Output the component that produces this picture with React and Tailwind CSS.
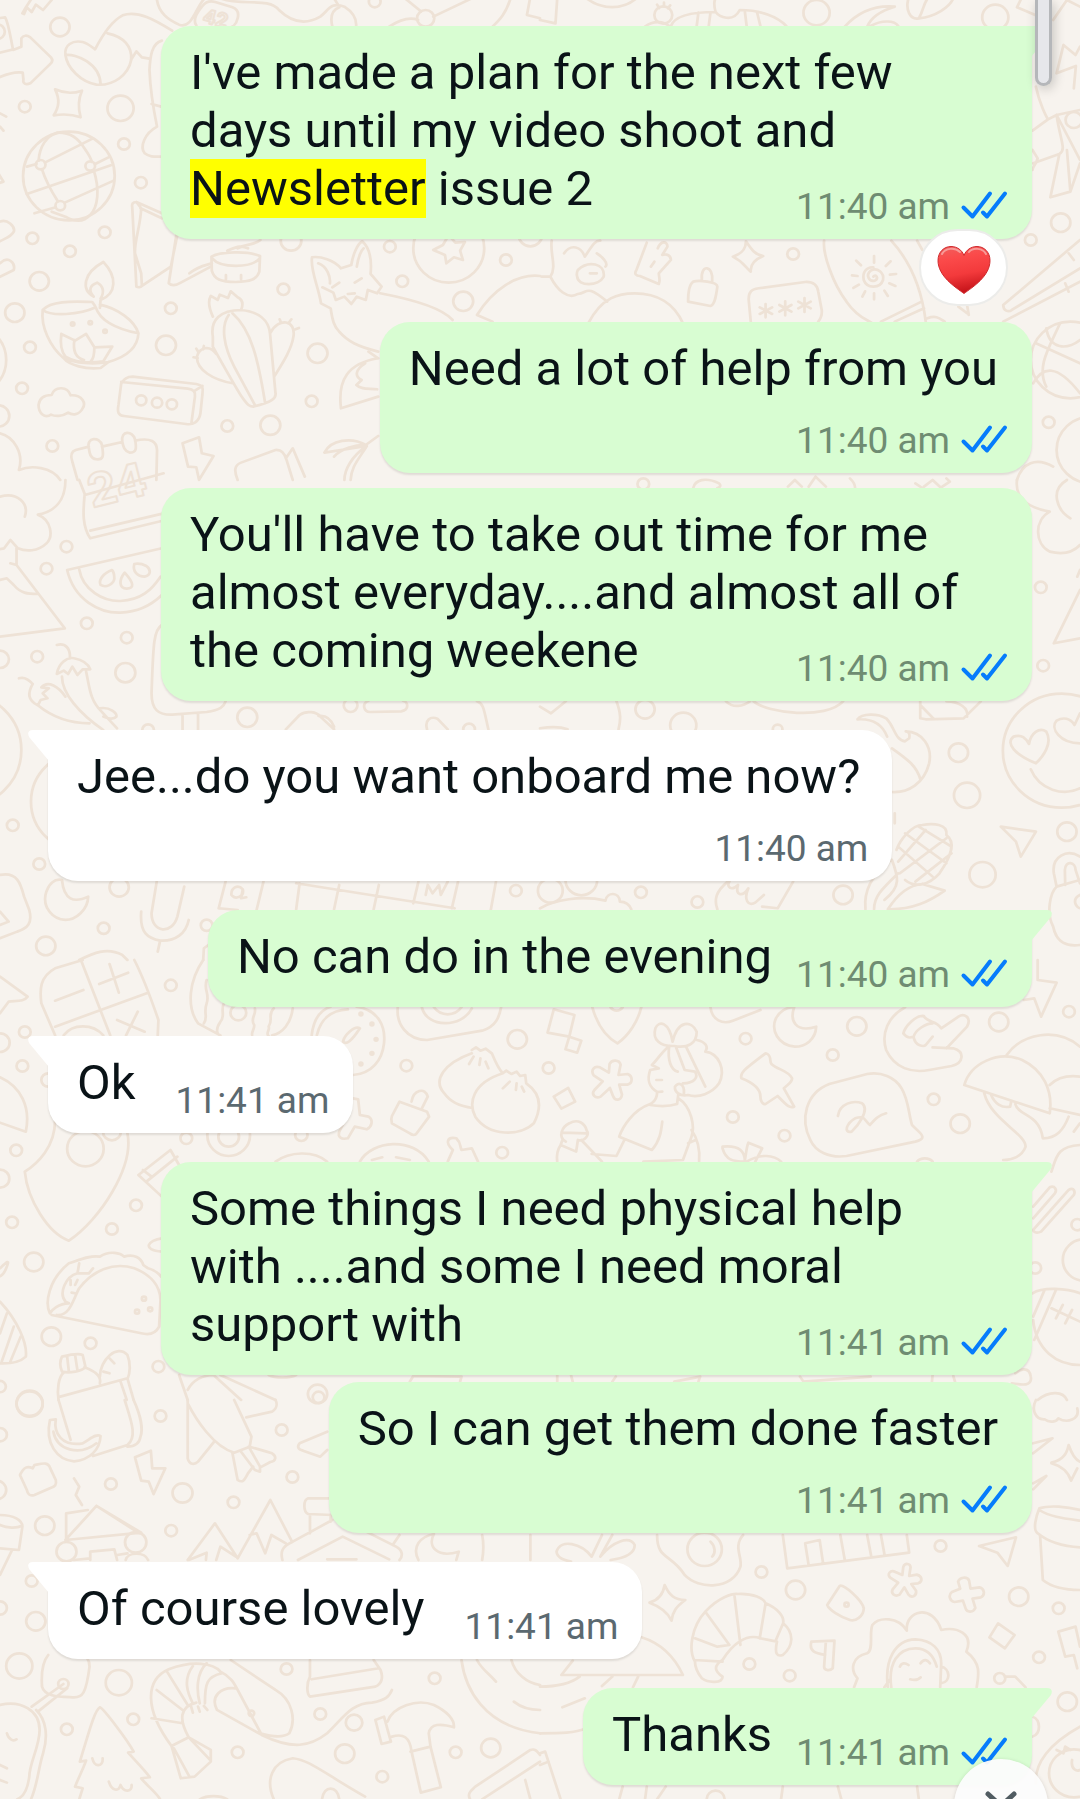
import clsx from "clsx";

const messages = [
  {
    id: 1,
    mine: true,
    tail: true,
    layout: "block",
    gap: "",
    text: (
      <>
        I've made a plan for the next few days until my video shoot and{" "}
        <mark className="bg-[#ffff00] py-px text-inherit">Newsletter</mark> issue 2
      </>
    ),
    time: "11:40 am",
    reaction: true,
  },
  { id: 2, mine: true, layout: "stacked", gap: "mt-4", text: "Need a lot of help from you", time: "11:40 am" },
  {
    id: 3,
    mine: true,
    layout: "block",
    gap: "mt-[15px]",
    text: (
      <>
        You'll have to take out time for me almost everyday....and almost all of{" "}
        <span className="whitespace-nowrap">the coming weekene</span>
      </>
    ),
    time: "11:40 am",
  },
  { id: 4, tail: true, layout: "stacked", gap: "mt-[29px]", text: "Jee...do you want onboard me now?", time: "11:40 am" },
  { id: 5, mine: true, tail: true, layout: "inline", gap: "mt-[29px]", text: "No can do in the evening", time: "11:40 am" },
  { id: 6, tail: true, layout: "inline", gap: "mt-[29px]", text: "Ok", time: "11:41 am" },
  {
    id: 7,
    mine: true,
    tail: true,
    layout: "block",
    gap: "mt-[29px]",
    text: (
      <>
        Some things I need physical help with ....and some I need moral{" "}
        <span className="whitespace-nowrap">support with</span>
      </>
    ),
    time: "11:41 am",
  },
  { id: 8, mine: true, layout: "stacked", gap: "mt-[7px]", text: "So I can get them done faster", time: "11:41 am" },
  { id: 9, tail: true, layout: "inline", gap: "mt-[29px]", text: "Of course lovely", time: "11:41 am" },
  { id: 10, mine: true, tail: true, layout: "inline", gap: "mt-[29px]", text: "Thanks", time: "11:41 am" },
];

// wallpaper is split in tiles, every tile has its own 1568 x 1440 drawing grid
const tiles = [
  {
    x: 0,
    y: 0,
    dots: [
      [174, 81, 28], [72, 320, 17], [350, 325, 38], [360, 432, 17], [409, 548, 17], [94, 715, 17], [304, 697, 17],
      [203, 754, 17], [114, 844, 28], [43, 938, 28], [87, 1042, 17], [64, 1165, 17], [496, 925, 17], [482, 1036, 29],
      [823, 868, 17], [845, 722, 30], [1132, 740, 17], [1168, 844, 17], [1345, 904, 29], [922, 1060, 29],
      [905, 1204, 17], [785, 1276, 29], [660, 1278, 17], [152, 1338, 17], [1469, 780, 17], [1303, 745, 103],
      [1088, 5, 17], [1236, 55, 25], [200, 528, 133], [118, 494, 14], [262, 498, 14], [175, 617, 14],
      [410, 1201, 15], [456, 1208, 15], [499, 1213, 15], [211, 972, 5], [262, 968, 5], [305, 994, 5],
      [-5, 1248, 32], [-90, 1080, 108], [-8, 95, 22], [1540, 705, 34],
    ],
    paths: [
      "M65 40C80 10 95-5 100-20M70 42L78 22L92 36L104 14L125 30L150 0",
      "M0 54L15 52C25 70 30 110 38 150L62 140V115C68 105 78 105 88 112L148 172C154 180 152 188 144 194L88 250C74 256 66 250 68 240L66 218C40 214 10 226-10 236M-10 160L40 148",
      "M190 165C186 135 210 120 240 126C255 130 265 140 276 148C300 100 330 60 356 46C400 30 450 60 500 92M190 165C195 205 235 245 280 254C330 258 372 225 381 180C384 140 360 110 312 100M190 165C220 160 290 190 292 252M380 180L396 154L412 172L434 176",
      "M470 122C440 130 436 170 434 210C436 260 440 300 456 380C420 400 405 440 420 460C435 472 450 470 470 470M440 312L468 320",
      "M455-5C460 40 490 60 520 74C560 90 570 10 600-10M588 18C598 4 610 2 625 6L675 22C690 28 694 40 690 55C686 76 676 84 655 84M588 18C570 40 560 62 570 76",
      "M640-5C700 20 780-10 810 30C840 60 880 80 930 50C955 30 960 5 1000 20C1030 40 1036 60 1034 80M965 80C958 50 965 30 985 22M970-5L985 20M1130 80C1160 60 1190 50 1214 60M1258 50L1380-10M1170-10L1222 34M1484-10C1470 40 1450 60 1430 80M1540-10L1530 45L1568 55",
      "M160 268C185 280 210 282 238 272C226 300 226 322 234 352C208 342 182 342 156 346C172 320 174 298 160 268Z",
      "M112 482C115 440 135 408 165 398C195 396 225 410 245 445C262 470 266 480 266 486M122 508C135 550 150 575 168 604M130 488L270 415M78 500L106 492M78 582L322 496M276 492L315 472M100 640L162 622M188 608L330 542M272 510C290 570 285 620 262 645C245 665 220 668 190 650L150 635",
      "M470 640L396 606C386 606 382 612 384 622L396 860C400 862 408 862 412 858L496 800L515 705M396 606L410 625C408 680 390 720 392 760L410 820L412 858M512 705L490 850C500 860 512 856 525 848L612 800M470 655L408 625M550 820C580 796 600 796 615 790",
      "M614 770C640 755 720 752 755 768L753 815C745 840 725 845 685 846C640 846 622 838 615 812ZM616 775C640 805 730 805 754 775M656 825V838M700 825V838M660 752C690 740 700 735 720 745M690 745C720 730 740 735 756 720",
      "M272 890C236 870 240 820 300 786C340 830 340 880 292 900L290 924M272 890C255 870 262 855 282 848C300 858 304 876 292 896M124 930C150 900 220 905 268 906L276 918M124 930C118 980 145 1040 185 1075C200 1095 250 1110 292 1104L315 1086C370 1070 400 1040 402 1000C390 960 340 925 290 914M124 930C150 950 230 945 278 922C290 960 330 985 402 1000M178 1002L218 1022L250 1002L274 1042L326 1040L300 1084C250 1092 215 1085 190 1070C175 1050 175 1025 178 1002M216 1020C210 1060 225 1075 244 1080M274 1042C274 1066 270 1078 264 1084M185 1075C220 1090 270 1094 315 1086",
      "M618 950C605 920 605 900 612 888L632 900L638 884L662 894L670 874L690 892C706 900 706 915 700 930M618 1010C610 960 640 930 700 930C750 935 780 960 784 1000L800 1180C802 1195 790 1206 736 1220C715 1220 705 1200 618 1040ZM664 945C640 980 650 1040 680 1100L740 1215M675 940C730 990 750 1080 770 1210M784 1000C810 950 860 960 852 1010C846 1050 820 1090 796 1130M676 1150C620 1140 570 1110 572 1070C580 1040 610 1036 628 1062M816 968L812 958M840 966L846 958M858 988L868 984M576 1056L570 1046M590 1048L592 1038M574 1074L562 1072",
      "M932 910C925 860 900 810 906 772C930 768 970 780 990 805L1020 795C1025 760 1040 730 1052 724C1080 750 1078 800 1076 822L1108 860L1095 880L1068 870L1062 900L1036 890L1020 912L1000 890L975 900L968 878L936 862M932 910L960 925C965 960 970 980 985 995C1010 1025 1040 1040 1098 1055M1104 880C1180 895 1280 920 1314 960M924 790C950 800 960 830 958 850M1036 800C1040 770 1050 750 1056 745M965 862L985 848M1030 848L1050 835M1010 882L1030 880",
      "M1303 705L1322 728L1350 726L1336 752L1344 780L1318 772L1296 790L1292 765L1258 750L1286 735Z",
      "M112 1215C115 1190 135 1185 150 1185C158 1160 195 1156 205 1186C240 1184 250 1210 240 1225C230 1246 210 1246 198 1238C180 1250 160 1250 148 1244C130 1256 112 1240 112 1215Z",
      "M352 1150C360 1140 365 1130 385 1130L570 1152C590 1156 590 1166 588 1180L582 1240C578 1266 560 1276 540 1272L360 1248C344 1246 340 1238 344 1215ZM352 1146L545 1166C562 1168 568 1176 566 1190L556 1268M566 1172L588 1158",
      "M258 1340L220 1350C206 1355 205 1370 210 1385L225 1440M296 1340L355 1326M392 1322C440 1312 455 1326 456 1350L454 1440M258 1345C250 1310 290 1310 296 1335C302 1370 300 1380 280 1378C262 1375 260 1360 258 1345ZM355 1325C350 1290 385 1292 392 1318C398 1350 394 1358 376 1358C360 1352 358 1340 355 1325Z",
      "M530 1330L578 1312L586 1360L620 1368L578 1440L570 1402L546 1400Z",
      "M690 1440C678 1410 682 1395 700 1388L800 1350C820 1348 828 1365 832 1380L850 1440M830 1375L850 1345L885 1430M942 1358C960 1320 1020 1310 1062 1335L1098 1308M942 1358L1065 1338C1020 1370 1000 1410 1000 1440M970 1370C990 1345 1030 1335 1062 1335M1065 1338C1040 1380 1020 1400 1018 1440",
      "M1098 1075C1010 1090 980 1140 990 1225L1098 1190M1060 1090C1030 1110 1030 1130 1050 1140L1035 1155C1050 1170 1070 1165 1095 1168M1070 1055L1098 1075M1385 945C1430 870 1500 820 1568 828M1385 945L1430 965",
      "M0 665C20 655 45 680 40 695C30 715 10 715-10 730M0 790C25 765 45 790 40 810L-10 835M0 340L18 350M0 380L10 392M-5 520L10 545L-5 550M0 1300C40 1310 70 1360 55 1410C90 1395 150 1400 175 1440",
    ],
  },
  {
    x: 540,
    y: 0,
    dots: [
      [358, 45, 26], [803, 38, 38], [1322, 52, 38], [735, 762, 17], [1425, 720, 17], [1512, 668, 28], [1477, 1267, 17],
      [1550, 360, 24], [1540, 1080, 115], [1600, 1350, 100],
    ],
    paths: [
      "M50-5L45 70L0 60M135-5C180 30 240 30 280-5M340 14L346 24M360 8V20M378 16L372 25M305 80C330 60 360 65 375 78M380 78C390 50 430 36 510 36C520 50 560 70 580 30C640 30 690 50 715 78M460 38L455 78M495 38L490 78M595 36L600 78M630 36L640 78M510 36C500 0 510-10 520-15",
      "M885 80C920 40 970 15 1030 20C980 35 960 55 950 80M960 78C990 60 1030 60 1040 78M1070-5C1060 30 1075 60 1100 55C1120 20 1110-5 1150-20M1100 55C1150 50 1190 20 1200-5",
      "M1385 22L1400-10M1385 22L1438 45M1490 60L1530 0L1568 20",
      "M1520 135L1500 220L1556 198L1550 265M1520 135L1555 165L1568 140M1440 260C1450 310 1470 350 1475 358L1430 392M1475 358L1500 345C1510 420 1530 450 1508 462L1432 490M1508 462L1482 592L1540 575L1530 450M1568 330L1500 345M1430 450L1445 475C1440 495 1430 500 1430 510M1500 345L1568 480M1540 575L1568 490",
      "M30 830C50 800 28 760 34 722M5 830H30C50 870 80 900 110 882C140 880 130 850 195 905M70 760C90 730 120 740 130 770C150 740 160 720 175 722M110 810C140 780 190 790 185 830C170 860 110 860 108 830C105 820 108 815 110 810M190 800C200 790 180 770 165 760M145 820L165 820M140 970C180 890 230 880 275 880C340 880 390 910 415 970",
      "M310 728L280 810C272 822 280 828 290 828L345 852C350 840 345 830 345 820L380 780C380 765 365 760 355 765L370 740C370 722 350 722 342 745M322 800L332 785",
      "M560 770C590 760 598 745 598 724C615 750 625 765 648 768C620 780 610 795 612 815C595 800 590 785 560 770Z",
      "M445 845C430 855 430 900 430 905L495 918C505 915 510 900 515 860C515 845 460 840 445 845ZM470 840C465 790 505 795 500 845",
      "M612 965L606 900C605 875 615 868 635 865L770 846C795 845 805 855 808 875L818 930C820 950 812 960 808 965M655 912V952M638 922L674 942M674 922L638 942M712 904V946M695 915L730 935M730 915L695 935M768 894V936M750 905L786 925M786 905L750 925",
      "M825 722C820 760 850 850 890 905C920 950 950 960 962 968M1020 722C1080 790 1110 880 1120 965M990 965L1108 905M1030 965L1115 925M1240 940L1215 920M1245 945L1240 915M1125 955C1150 945 1160 955 1175 965M1095 722L1110 750",
      "M968 830C975 820 985 835 972 842C955 846 945 825 960 812C980 800 1000 820 996 840C988 865 950 868 940 840C935 815 950 800 968 802M970 768V788M918 782L932 796M906 826L922 828M910 864L926 854M936 890L944 874M970 898V880M1010 888L1000 872M1032 858L1014 850M1034 822L1016 824M1018 784L1004 798",
      "M1568 720L1345 915C1345 932 1360 938 1370 930L1568 805M1345 965L1568 845M1535 760L1550 780M1525 850L1535 875",
      "M1470 985C1480 1050 1530 1050 1568 1020M1440 1030L1568 1090M1432 1150C1460 1100 1500 1090 1568 1180M1470 1160C1440 1100 1480 1040 1510 970",
      "M1385 1440C1400 1390 1440 1370 1490 1400",
    ],
  },
  {
    x: 0,
    y: 480,
    dots: [
      [193, 200, 17], [135, 266, 17], [252, 430, 17], [368, 473, 17], [108, 530, 17], [364, 578, 29], [718, 712, 29],
      [0, 538, 26], [37, 1036, 17], [114, 1152, 17], [346, 1222, 28], [301, 1345, 17], [133, 1398, 28], [600, 1336, 17],
      [1018, 676, 20], [1362, 748, 17], [1498, 1232, 17], [430, 750, 17], [-110, 810, 172], [240, 965, 150],
    ],
    paths: [
      "M190 0C190 60 160 95 110 104C150 120 155 170 135 190C110 215 75 215 52 205L30 180L12 205L-10 210M0 50C50 35 85 70 72 110M48 205V255L188 445L0 470M48 255L30 250M0 300L20 295L40 315C60 340 80 342 110 342",
      "M230 0L246 42C240 100 240 140 262 175L490 118M246 45L475 -20M262 152L475 100",
      "M195 270L470 205M195 270C215 360 290 400 350 398C400 396 440 375 470 345M230 268C240 330 300 365 350 363C410 360 440 330 466 290M325 270C300 280 285 300 292 315C308 325 330 312 332 296C332 280 330 275 325 270ZM362 278C345 300 345 325 368 326C390 325 390 310 362 278ZM390 252C384 275 400 290 420 290C440 285 438 268 425 258C410 250 400 250 390 252Z",
      "M165 495C190 488 205 505 203 535M165 582C170 550 195 530 215 535C240 540 255 550 262 568L240 568L225 585L210 560L198 582L185 572ZM180 590C180 640 230 700 300 750M250 575C260 620 260 660 295 695L340 745M55 595C70 590 85 600 95 612M95 612C80 640 80 660 110 676L118 660L138 655L124 640L142 625L120 622C140 600 170 620 190 650M110 676C150 710 200 730 260 730M290 685C320 680 340 700 338 710C330 720 310 715 300 710",
      "M470 435C445 450 445 500 440 640C440 690 460 705 500 704L600 696C640 690 650 680 655 664M530 705V750M575 700V750M830 748L870 705C890 690 920 696 930 710L970 748M925 708C945 705 960 715 970 740M1070 662C1050 670 1055 695 1075 696L1165 694C1190 690 1185 665 1170 662M1385 664C1405 670 1405 690 1418 748M1240 748C1232 720 1250 708 1270 716L1300 748",
      "M180 1200C185 1260 215 1270 256 1250C255 1290 220 1320 190 1320C150 1318 125 1280 132 1245C140 1210 160 1195 180 1200Z",
      "M455 1205L440 1300C440 1360 500 1365 515 1310L535 1220M410 1295C405 1360 430 1375 465 1382C510 1385 540 1360 548 1320M465 1382L458 1415M635 1285L655 1205M635 1285L690 1290M765 1205L745 1290M870 1210L860 1288M860 1210L1320 1285M985 1215L970 1288M1100 1215L1085 1288M1215 1205L1200 1270M1330 1205L1312 1285M1440 1205L1425 1290",
      "M0 1185C50 1175 60 1210 70 1250L85 1290C95 1330 80 1345 50 1355L0 1375M0 1295L25 1325L0 1335M230 1440C270 1420 310 1400 355 1425L370 1440M590 1440L592 1405L606 1395M1236 1245L1242 1215L1256 1240L1275 1215L1280 1245L1300 1205M672 1245C670 1225 690 1210 705 1228C710 1250 685 1258 675 1248M705 1228L700 1255L715 1252",
    ],
  },
  {
    x: 540,
    y: 480,
    dots: [
      [1454, 322, 17], [1461, 557, 17], [1215, 818, 28], [1240, 946, 38], [1285, 1184, 38], [1530, 1055, 28],
      [305, 688, 28], [416, 736, 38], [293, 1237, 17], [457, 1266, 17], [880, 1245, 28], [1515, 812, 171],
      [300, 12, 17], [30, 1232, 36], [120, 1200, 46], [690, 748, 14],
    ],
    paths: [
      "M1385 0C1380 40 1400 80 1480 95C1435 120 1435 190 1480 215C1520 225 1550 215 1568 195M1540 115C1500 90 1480 30 1530 0M1568 330L1492 490L1568 475M1560 290L1568 270",
      "M1440 850C1380 825 1350 790 1375 770C1400 762 1410 775 1420 792C1425 760 1450 740 1470 755C1490 790 1460 830 1440 850ZM1568 790C1510 790 1480 745 1500 722C1520 710 1540 715 1552 735L1568 700M1425 868C1450 930 1520 950 1568 925",
      "M1008 770C995 735 970 715 922 718C935 700 980 700 1005 715C1030 740 1030 780 1060 784L1072 775C1075 760 1070 755 1062 754C1110 755 1140 800 1130 850C1115 910 1070 940 1020 936M1022 805C1070 840 1095 860 1105 900",
      "M1104 664L1104 715L1120 718L1230 715L1280 664M1104 675L1142 715M1180 664C1220 665 1245 685 1240 710",
      "M620 664C660 700 830 720 880 664M0 680L32 700L75 664M0 745C30 740 60 740 80 748M222 664C235 700 235 720 228 748M540 664C560 685 590 680 610 664",
      "M1022 1140C1040 1190 1050 1220 1000 1260M1035 1110C1045 1080 1080 1035 1110 1035C1140 1030 1185 1030 1180 1065C1205 1085 1200 1120 1160 1180C1130 1215 1090 1225 1060 1200M1060 1060L1180 1150M1040 1100L1140 1190M1100 1040L1195 1100M1045 1180L1180 1075M1040 1145L1120 1050M1090 1205L1195 1120M1110 1212L1175 1232C1130 1265 1080 1290 1010 1288M1010 1288C1040 1240 1070 1215 1110 1212M945 1288C940 1240 955 1190 1020 1140M970 1288C970 1250 990 1230 1040 1180M1030 1000L1030 1030",
      "M1338 1040L1440 1055L1396 1130L1382 1085Z",
      "M1568 1130C1530 1105 1485 1130 1492 1180L1500 1220C1480 1240 1470 1300 1490 1340C1500 1390 1530 1400 1568 1395M1525 1215L1524 1170C1525 1140 1555 1145 1555 1170L1568 1210M1500 1220L1568 1200M1568 1245C1540 1260 1560 1285 1568 1285",
      "M0 1285C40 1260 120 1245 190 1262C195 1235 230 1235 232 1265C250 1265 260 1275 265 1288M545 1205C510 1235 505 1260 515 1288M550 1205C540 1220 555 1235 575 1215C565 1250 590 1250 605 1225C590 1260 605 1280 625 1268L650 1245M735 1205L690 1285L645 1280",
      "M445 24C450 0 480-10 520 10C530 20 515 24 515 24M720 20L740 0L760 20M780 20L800-10L830 20M915 24C915 10 905 0 900-5M1090 10L1110 24M1115 20L1140 0L1165 24M1165 22L1190 5L1180-5",
    ],
  },
  {
    x: 0,
    y: 960,
    dots: [
      [496, 76, 17], [72, 216, 17], [65, 318, 17], [0, 248, 28], [1502, 238, 28], [1180, 317, 17], [47, 571, 17],
      [541, 535, 17], [664, 530, 30], [664, 526, 62], [0, 656, 27], [395, 736, 17], [35, 787, 17], [325, 807, 17],
      [98, 906, 28], [149, 1130, 28], [263, 1150, 17], [460, 1220, 17], [1458, 578, 17], [922, 1302, 28],
      [248, 566, 53], [0, 1280, 17], [418, 1016, 6], [436, 1048, 6], [398, 1055, 6], [1048, 162, 4], [1080, 192, 4],
      [1092, 238, 4], [1080, 280, 4], [1048, 312, 4], [692, 158, 23], [325, 515, 26], [875, 525, 18], [140, 360, 20],
      [86, 1330, 38],
    ],
    paths: [
      "M0 50L80 110C70 125 50 122 25 125L0 160M120 130C115 90 115 50 160 25L240 0M390 0C420 60 440 120 460 180L458 226M120 130L160 226M235 0L320 226M160 200L430 98M160 122L242 90M288 72L372 38M318 12L345 98M340 180L420 215M400 155L366 226M185 226C210 190 270 190 300 226M590 0C550 60 540 140 575 190L640 226M600 60C590 90 610 100 600 130C590 160 605 170 592 190M650 130C640 150 655 170 640 185C630 200 628 210 632 220M740 145C745 165 725 175 738 195C740 205 730 215 732 225M795 145C775 165 795 175 780 200C785 210 770 220 780 228M850 145C845 190 820 220 790 226",
      "M905 226C910 180 930 150 960 140M920 226C930 180 960 150 1010 148M1035 140C1100 150 1120 200 1115 250C1110 300 1080 340 1025 345M1045 205C1030 195 1000 225 996 245C1005 255 1020 245 1045 205ZM1155 142C1150 190 1180 240 1240 240L1400 212C1440 200 1450 170 1455 142M1225 142C1240 205 1340 205 1370 145M1260 142C1280 170 1320 170 1340 142",
      "M1370 270L1382 262L1395 272L1410 266L1428 280C1440 310 1450 330 1460 340M1370 280C1290 310 1255 360 1290 400C1310 430 1340 440 1372 444M1375 290L1362 312M1395 295L1392 315M1410 305L1418 325M1460 340C1370 370 1360 430 1380 470C1420 530 1510 530 1550 490C1575 440 1570 400 1528 370L1525 345L1510 348L1500 335L1485 342L1470 332ZM1480 365L1460 385M1500 370L1498 390M1515 380L1522 395",
      "M1025 415L1040 418L1045 465L1070 470C1085 480 1080 500 1065 508L1030 500L1010 535C990 540 980 530 985 515L1000 485M1160 425L1240 455L1246 470L1210 520C1205 528 1195 525 1190 520L1138 490C1135 480 1135 475 1138 468ZM1195 425C1200 390 1235 380 1242 410L1225 445",
      "M800 605C840 575 910 570 950 605M1045 605C1080 540 1200 530 1245 605M1080 600L1110 592M1150 592L1190 600M1300 605L1315 570C1290 545 1300 530 1325 535C1340 550 1335 560 1340 570L1370 565L1388 605",
      "M160 480C160 560 110 610 72 635C80 720 140 820 200 842C290 780 390 620 370 520M0 352C60 380 90 440 75 515L0 488M402 645L495 570L520 615M402 645L470 710M415 630L440 650M425 665L515 590M470 835C430 840 410 870 470 875",
      "M145 1060C130 1030 140 960 200 910C230 900 260 885 290 890C320 870 350 880 360 890C390 880 410 895 416 915L430 925C450 930 460 940 468 950M165 1065C205 1070 215 1010 230 985C270 930 330 905 390 925C440 945 465 980 466 1020L462 1100C450 1125 430 1125 410 1120L150 1065M225 940C190 950 170 1000 190 1025L200 1030C170 1030 150 1050 145 1060M230 910L225 940L258 940L270 925M205 975V960M218 1000L208 998M225 960L218 975",
      "M0 925C20 905 30 895 18 925C10 945 0 950-5 950M0 1025C50 1080 80 1150 75 1190C50 1215 0 1210-5 1210M20 1060L0 1120M40 1100L5 1205M60 1130L30 1205",
      "M180 1190C200 1185 230 1180 240 1185L248 1220C240 1235 200 1240 180 1235C172 1215 175 1200 180 1190ZM195 1190L200 1235M218 1185L225 1232M185 1238C170 1250 165 1290 170 1320M245 1222C280 1235 295 1250 290 1270M175 1310L370 1255L388 1320M350 1265L368 1320M290 1250C290 1200 340 1150 370 1185C380 1210 378 1240 370 1258M318 1195L332 1210M300 1235L318 1240",
      "M520 1245L545 1320M545 1290C560 1260 590 1245 620 1245L700 1320M640 1245L800 1320M780 1245C800 1255 840 1255 860 1245M1190 1265L1200 1248L1340 1250L1336 1265",
    ],
  },
  {
    x: 540,
    y: 960,
    dots: [
      [597, 236, 17], [920, 199, 28], [850, 285, 17], [25, 324, 17], [560, 471, 17], [710, 527, 17], [1143, 418, 17],
      [1220, 491, 28], [1332, 186, 28], [1536, 155, 17], [1560, 794, 17], [1438, 924, 17], [1580, 900, 62],
    ],
    paths: [
      "M40 148L100 165L85 230L22 218ZM85 230L120 242L108 278L74 268ZM40 410L82 384L102 425L62 446ZM152 142C165 190 190 230 225 250C260 225 285 180 294 142M205 142C215 155 230 155 240 142M495 142C500 180 530 195 560 182L640 150",
      "M738 142C725 180 740 220 802 200C800 240 770 260 740 260C690 255 670 210 685 175C695 155 715 140 738 142Z",
      "M200 338L202 312C208 298 230 298 234 314L228 345L254 342C270 348 270 370 254 374L230 374L238 404C236 422 218 424 212 408L203 384L176 410C160 418 148 402 158 390L182 364L156 346C146 330 158 316 174 322Z",
      "M385 245C400 180 440 180 455 215C455 250 430 265 390 258C350 260 325 240 335 205C345 180 375 185 385 245ZM455 240C480 245 490 260 480 275C520 280 540 330 520 370C500 400 460 415 430 405C405 410 390 395 392 380C400 365 420 370 418 400M375 258C350 280 340 300 325 315L345 325L320 330C310 360 315 380 340 396L355 395M425 262L480 380M395 262L420 330L450 335C460 350 450 370 415 370M375 260C370 300 380 330 400 335M338 360H354M340 398C340 425 320 430 320 435C350 440 380 438 398 432L402 400M320 432C270 450 240 500 230 530L325 570C350 540 352 510 355 485M402 415C440 440 450 500 440 530L415 600M245 540L222 588L150 582M300 605L415 600M440 510C460 540 465 570 462 605M430 550L452 540M75 545C50 530 65 500 85 490C110 475 130 490 135 510C145 525 130 545 110 540L105 575L60 555L65 540M66 518L135 520M120 540L180 605M60 555C50 570 48 590 50 605",
      "M655 280C675 285 665 305 672 312C690 330 720 330 732 355C732 370 715 375 708 385L738 440C725 445 720 440 690 408L655 432C645 435 640 420 640 410C640 380 610 365 585 355C580 340 590 330 655 280Z",
      "M840 372C770 400 755 480 785 540C800 575 840 595 890 588L1090 545C1115 538 1115 530 1100 515L1080 495C1070 460 1070 420 1050 385C1030 350 990 335 950 342ZM865 468C870 430 910 420 935 430C960 450 920 500 905 515C880 520 890 490 915 475C945 465 940 480 958 495C975 475 985 465 1005 460",
      "M1060 142C1010 170 990 220 1005 270C1030 325 1080 340 1130 330L1195 318C1230 310 1235 275 1200 265L1140 262M1180 265L1240 200C1255 170 1230 160 1215 170L1165 205C1150 180 1130 190 1115 170M1115 168C1090 165 1060 200 1055 220C1070 240 1080 230 1085 230C1090 210 1120 190 1140 190M1085 232C1090 260 1115 260 1120 255L1140 230",
      "M1445 0V60L1500 68L1455 170L1435 115L1405 120M1232 375C1250 310 1330 270 1400 300C1460 330 1490 390 1480 460ZM1355 285C1400 220 1500 200 1568 260M1480 375C1500 355 1530 345 1568 350M1480 445L1568 465M1290 400C1310 480 1410 520 1410 560C1400 590 1370 600 1345 600M1310 405C1320 430 1340 445 1365 440L1368 425M1380 432C1390 470 1450 460 1460 535C1500 535 1520 510 1535 470M1568 490L1550 515M1568 555C1500 560 1500 590 1485 635",
      "M530 565C540 600 560 605 595 605C595 575 580 555 530 560ZM595 600C600 570 600 560 605 548L645 565L625 605M600 605C640 580 680 585 700 605M1095 605C1105 592 1130 592 1140 605",
      "M1432 740L1480 682C1495 675 1502 690 1495 700L1432 775M1432 810L1535 690C1550 680 1555 695 1550 705L1455 815C1440 822 1432 815 1432 810",
      "M1430 1000C1460 980 1530 985 1568 1000M1432 1080C1440 1170 1500 1215 1568 1215M1465 990L1432 1070M1498 990L1435 1140M1485 1045L1568 1085M1518 1035L1498 1075M1545 1050L1525 1090M1380 1240C1390 1230 1420 1215 1425 1250C1430 1280 1400 1275 1370 1270M1445 1320C1480 1290 1520 1295 1530 1320",
      "M50 1245V1265M95 1265L90 1245M220 1250L210 1265M390 1265L465 1250L460 1265M755 1250L765 1265L960 1250M1140 1245L1138 1265M1200 1248L1205 1265",
    ],
  },
  {
    x: 0,
    y: 1400,
    dots: [
      [86, 12, 38], [466, 48, 17], [818, 90, 17], [849, 231, 17], [322, 252, 17], [530, 279, 29], [678, 307, 17],
      [497, 392, 17], [130, 377, 28], [0, 104, 20], [-10, 270, 28], [92, 543, 17], [104, 664, 28], [0, 624, 20],
      [56, 798, 38], [345, 848, 38], [387, 958, 17], [194, 988, 17], [832, 807, 17], [1262, 835, 17], [930, 942, 17],
      [690, 1057, 17], [1001, 1061, 28], [1110, 1130, 17], [1323, 1057, 17], [1425, 1044, 28], [184, 852, 15],
      [1028, 968, 24], [193, 455, 29], [394, 427, 31], [730, 940, 8], [925, -8, 17],
    ],
    paths: [
      "M145 60L162 58C155 100 180 140 240 130C265 115 280 100 292 108C290 150 260 180 215 184C165 180 130 130 145 60M155 95C165 150 230 170 280 130M170 0L205 120M362 0C380 60 400 110 370 135L270 168M388 0C410 50 415 90 408 110C405 130 390 140 370 140",
      "M545 0V175C550 195 565 195 575 185L622 125M545 10C570 60 620 140 680 158L725 140M680 0L730 110L725 140C740 145 760 150 790 160C805 170 800 185 785 186L760 200M675 160L690 240C705 250 710 240 720 220L735 200M700 155L740 210L755 215L755 200L722 140M715 52L790 35C805 25 805 10 800 0",
      "M950 95L870 130C862 140 865 148 880 152L930 170L950 150",
      "M392 172L438 152L442 205L480 205L446 282L432 245L410 242Z",
      "M58 225C70 200 80 198 95 205L100 195C125 190 140 185 146 205L162 240C165 255 160 260 145 265L100 285C85 290 80 280 78 270Z",
      "M215 235L230 260L220 285L238 315M280 318L190 420L410 398ZM192 425L192 340L255 330M215 480L262 475M340 465L370 460M280 318L405 400M262 480V455L332 448L340 480M365 480C370 455 420 455 430 480",
      "M0 345C40 345 65 360 65 380L55 450L0 445M0 375C20 385 50 385 62 378M35 450L0 525",
      "M545 480L624 370L690 475L785 300L848 425M548 480L600 458L598 480M628 480L640 440L685 470M725 405L745 400L770 460L788 405L830 430M955 295L895 295C880 300 880 335 895 342L965 345M900 345V400M960 345V365M820 480C815 460 815 440 850 425L965 360M865 480L995 410L1130 478M1000 362L1150 440C1170 450 1170 470 1160 480M950 478H1035M1140 435L1160 405M1215 480C1195 440 1220 410 1260 402C1240 440 1270 475 1332 455L1325 480M1400 405C1405 430 1405 450 1400 480M1540 405V480",
      "M140 765C120 790 120 830 122 860C130 890 170 890 210 892C240 895 250 880 260 800C260 780 250 765 235 765M184 852L92 920M195 865L110 935M0 915C60 900 115 930 115 990C115 1040 85 1090 85 1130C80 1170 70 1190 50 1198M105 930C135 960 140 1010 125 1060C110 1110 110 1150 90 1198M20 1000C25 1020 40 1025 48 1018M0 1095L20 1105M0 1140L20 1148",
      "M290 922C300 925 370 1020 388 1055L372 1058C400 1090 420 1110 435 1132L410 1135C430 1160 455 1180 465 1198M290 922C275 930 260 990 232 1085L250 1082C240 1110 225 1140 218 1160L240 1165L230 1198M268 1075C275 1105 300 1100 298 1075M316 1145C325 1175 345 1175 350 1155C360 1180 385 1175 382 1155",
      "M498 1038C420 930 420 840 490 808C560 780 620 790 640 815C670 830 680 850 690 870L760 1005L630 930C610 890 640 860 685 865M498 1038L548 1012C520 960 520 920 570 908M440 955L530 970M455 870L530 930M485 815L545 915M560 798C530 840 545 880 560 910M600 790C570 820 570 870 580 910M645 820C600 830 595 850 595 910M498 1038L525 1135L565 1130L612 1085L612 1050L548 1012M505 1045L550 1130M548 1012L610 1080M555 920L560 938M575 920L580 935M592 918L602 930M670 780L800 870C850 900 860 960 840 1000C820 1015 790 1010 755 1000M760 1005C850 1050 900 1040 950 1000C1000 950 1020 910 1080 908C1120 900 1130 890 1138 870",
      "M900 780V830C890 850 890 880 900 890L1090 860C1110 850 1112 830 1105 810L1085 780M905 838L1100 805",
      "M1090 960L1115 950L1135 1025L1108 1032ZM1125 965C1140 920 1210 895 1260 915C1300 935 1320 960 1318 982C1280 970 1250 970 1245 1000L1250 1040L1280 1162L1222 1178L1195 1055C1190 1010 1170 1000 1138 1010M1192 1055L1250 1040",
      "M795 1198C770 1140 790 1085 850 1075C900 1080 940 1120 1060 1190M935 1198C940 1155 980 1155 985 1198M580 1198C600 1185 640 1185 660 1198M1340 780C1350 860 1400 980 1568 1000M1385 780C1400 810 1420 820 1440 845M1485 780C1495 820 1530 850 1568 855M1492 905C1510 920 1540 930 1568 930M1365 1198C1355 1180 1370 1170 1380 1160L1540 1050C1555 1045 1560 1055 1568 1065M1400 1198L1568 1085M1525 1140L1540 1198",
    ],
  },
  {
    x: 540,
    y: 1400,
    dots: [
      [643, 516, 17], [742, 570, 28], [1163, 438, 17], [1390, 590, 28], [1506, 625, 17], [1449, 772, 17],
      [608, 792, 17], [725, 827, 17], [1531, 905, 28], [478, 448, 50], [890, 614, 6], [1335, 835, 16], [1550, 1120, 72],
      [510, 1198, 26],
    ],
    paths: [
      "M1440 0C1425 30 1440 60 1465 58C1480 70 1500 65 1505 55C1530 70 1568 60 1560 25M1432 130L1488 115L1432 160M1432 250L1470 228L1432 268M1485 188C1520 180 1530 160 1535 135C1545 165 1555 180 1568 185M1485 190C1520 200 1535 220 1542 242L1560 205",
      "M150 470C120 430 60 415 48 455C50 475 70 480 90 485M180 405L150 470M210 405L175 470C210 425 260 405 275 435C275 465 240 475 205 480M340 405C340 480 380 460 420 525C460 570 560 570 582 500C588 470 560 440 590 405M495 425C510 440 510 460 500 470",
      "M705 405L718 505L1072 458L1065 405M770 430L812 420L822 490M770 430L780 495M872 405L885 480M950 405L962 470M990 405L1000 462",
      "M1275 438L1382 412L1358 498L1328 458ZM1450 325C1440 350 1430 390 1445 400C1480 430 1530 440 1568 442M1450 325C1480 315 1530 320 1568 330M1450 330C1480 350 1520 355 1568 362M1452 405L1460 540C1490 565 1530 570 1568 570",
      "M318 608C345 600 358 580 362 555C375 585 390 600 422 600C395 620 385 635 382 662C370 635 350 620 318 608Z",
      "M450 785C430 750 440 680 480 635C520 590 560 580 575 582C620 580 650 595 655 610C690 625 710 650 706 670C740 700 735 740 705 765C690 770 680 765 688 725L640 715C600 700 560 730 530 780C500 800 510 815 530 830C530 850 490 850 470 835C455 815 450 800 450 785M450 715L515 740L550 735L480 635M448 780L530 785M565 590L582 735M655 610L638 715M706 670L685 720",
      "M870 558C880 550 935 600 940 625C940 650 915 665 900 660C870 650 840 630 834 615ZM1052 525L1055 500C1060 488 1075 490 1076 502L1072 528L1094 524C1110 528 1112 545 1098 550L1078 552L1092 572C1094 588 1080 596 1070 584L1058 562L1044 584C1030 592 1018 580 1024 568L1040 548L1018 534C1006 522 1018 508 1032 516Z",
      "M1220 566L1214 545C1218 532 1240 528 1246 542L1250 566L1276 562C1290 566 1294 584 1280 592L1256 596L1264 624C1258 638 1240 638 1236 626L1228 602L1204 606C1190 604 1184 586 1196 576ZM1330 670L1378 705L1350 745L1305 712ZM788 725L855 722L850 805C840 815 825 810 825 800L830 725M828 765C800 760 780 755 788 725M1505 695L1555 680L1568 740M1505 695L1525 770L1550 765L1560 805",
      "M912 862L922 835C900 810 905 770 950 760C970 750 955 700 965 675C985 650 1040 650 1065 692C1060 630 1140 610 1165 690C1210 680 1260 700 1238 755C1280 790 1275 820 1268 862M1010 862C1000 780 1030 720 1090 718C1140 720 1165 750 1165 790L1162 862M1020 862C1010 790 1040 745 1090 745C1130 745 1145 775 1152 800M1165 800C1190 805 1195 845 1165 850M1000 862L1015 840M1045 800C1050 788 1060 788 1070 795M1105 790C1115 775 1125 780 1132 790M1075 838C1090 842 1100 838 1105 832M1350 830L1380 830L1410 862",
      "M295 712C350 730 390 770 415 825H62L95 782M0 860C50 860 90 850 115 830M210 830L180 858M285 830L270 862M65 922L130 895M0 1000C60 1000 100 1000 135 985M0 1060L15 1055L60 1198M25 1085L0 1095M230 1198L240 1160M305 1198L310 1160M340 1198L365 1160M700 1198L705 1160M865 1160L875 1198M1095 1160L1100 1198M1430 950C1455 960 1455 1000 1430 1010M1568 980C1480 1030 1435 1090 1440 1150M1500 1050L1520 1060L1525 1040L1540 1050M1545 1080C1540 1110 1560 1115 1568 1110",
    ],
  },
];

function Wallpaper() {
  return (
    <svg
      aria-hidden="true"
      viewBox="0 0 1080 1799"
      preserveAspectRatio="xMidYMin slice"
      className="absolute inset-0 h-full w-full"
      fill="none"
      stroke="#eee2d6"
      strokeWidth="8"
      strokeLinecap="round"
      strokeLinejoin="round">
      {tiles.map((tile) => (
        <g key={`${tile.x}-${tile.y}`} transform={`translate(${tile.x} ${tile.y}) scale(0.3444 0.3333)`}>
          {tile.dots.map(([cx, cy, r]) => (
            <circle key={`${cx}-${cy}-${r}`} cx={cx} cy={cy} r={r} />
          ))}
          {tile.paths.map((d) => (
            <path key={d} d={d} />
          ))}
        </g>
      ))}
      <g strokeWidth="2" fontFamily="Inter, sans-serif" fontWeight="700">
        <text x="202" y="22" fontSize="19" transform="rotate(14 202 22)">42</text>
        <text x="92" y="508" fontSize="46" transform="rotate(-14 92 508)">24</text>
      </g>
    </svg>
  );
}

function Ticks() {
  return (
    <svg
      role="img"
      aria-label="Read"
      viewBox="0 0 48 30"
      className="mb-[5px] h-[30px] w-12"
      fill="none"
      stroke="#067cfc"
      strokeWidth="4"
      strokeLinecap="round"
      strokeLinejoin="round">
      <path d="M3.5 17.5 12.5 26.5 30 3.5M23 22.5 27 26.5 45 3.5" />
    </svg>
  );
}

function Tail({ mine }) {
  return (
    <svg
      aria-hidden="true"
      viewBox="0 0 21 32"
      className={clsx("absolute top-0 h-8 w-[21px]", mine ? "-right-5 -scale-x-100 text-[#d8fdd2]" : "-left-5 text-white")}>
      <path d="M21 0H5C0 0-1 4 1.5 7.5L21 31Z" fill="currentColor" />
    </svg>
  );
}

function Heart() {
  return (
    <svg aria-hidden="true" viewBox="0 0 54 50" className="h-[50px] w-[54px]">
      <defs>
        <linearGradient id="heart-fill" x1="0" y1="0" x2="0.2" y2="1">
          <stop offset="0" stopColor="#f0605e" />
          <stop offset="0.3" stopColor="#fb4a4a" />
          <stop offset="0.65" stopColor="#f33a3c" />
          <stop offset="1" stopColor="#c9161c" />
        </linearGradient>
      </defs>
      <path
        d="M27 48.5C18 42 1 31 1 15.5C1 7 7 1.5 14 1.5C20 1.500 25 5 27 10.500C29 5 34 1.500 40 1.500C47 1.500 53 7 53 15.500C53 31 36 42 27 48.500Z"
        fill="url(#heart-fill)"
        stroke="#cf2a2d"
      />
      <path d="M5 9C8 3 18 2 23 7M32 7C36 2 46 3 49 9" fill="none" stroke="#f79a97" strokeWidth="2" strokeLinecap="round" />
    </svg>
  );
}

function Message({ message }) {
  const { mine, tail, layout, gap, text, time, reaction } = message;

  return (
    <li className={clsx("flex flex-col", mine ? "items-end" : "items-start", gap)}>
      <div
        className={clsx(
          "relative max-w-[871px] rounded-[30px] shadow-[0_2px_2px_rgba(60,50,40,0.12)]",
          mine ? "bg-[#d8fdd2]" : "bg-white",
          tail && (mine ? "rounded-tr-none" : "rounded-tl-none"),
          layout === "block" && "grid",
          layout === "stacked" && "flex flex-col",
          layout === "inline" && "flex items-end",
          layout === "inline" && (mine ? "gap-6" : "gap-10")
        )}>
        {tail && <Tail mine={mine} />}
        <p
          className={clsx(
            "pt-[18px] pl-[29px] text-[49px] leading-[58px] text-[#0a1317]",
            layout === "block" && "col-start-1 row-start-1 pr-[34px] pb-[21px]",
            layout === "stacked" && (mine ? "pr-[34px]" : "pr-8"),
            layout === "inline" && "pb-[21px]"
          )}>
          {text}
        </p>
        <div
          className={clsx(
            "flex items-end gap-2.5 pr-6 pb-[14px] text-[37px] leading-9",
            mine ? "text-[#6f8c72]" : "text-[#5b6970]",
            layout === "block" && "col-start-1 row-start-1 self-end justify-self-end",
            layout === "stacked" && "mt-[25px] self-end"
          )}>
          <time>{time}</time>
          {mine && <Ticks />}
        </div>
      </div>
      {reaction && (
        <button
          type="button"
          aria-label="Heart reaction"
          className="relative -mt-[10px] mr-6 flex h-[77px] w-[89px] items-center justify-center rounded-full border-2 border-[#ececea] bg-white pt-1">
          <Heart />
        </button>
      )}
    </li>
  );
}

export default function App() {
  return (
    <main className="relative h-screen overflow-hidden bg-[#f7f3ee] font-[Roboto,sans-serif]">
      <Wallpaper />

      <ul className="relative px-12 pt-[26px]">
        {messages.map((message) => (
          <Message key={message.id} message={message} />
        ))}
      </ul>

      {/* scroll thumb */}
      <div className="absolute top-0 right-7 h-[86px] w-[17px] rounded-b-full border-3 border-t-0 border-[#b5b7ba] bg-[#e6e7eb] shadow-[2px_3px_12px_rgba(0,0,0,0.2)]" />

      <button
        type="button"
        aria-label="Scroll to latest"
        className="absolute right-8 -bottom-[54px] flex size-[94px] justify-center rounded-full bg-[#fcfcfc]/95 pt-[30px] shadow-[0_1px_4px_rgba(0,0,0,0.15)]">
        <svg
          aria-hidden="true"
          viewBox="0 0 36 40"
          className="h-10 w-9"
          fill="none"
          stroke="#515c62"
          strokeWidth="5"
          strokeLinecap="round">
          <path d="M5 5 18 17 31 5M5 20 18 32 31 20" />
        </svg>
      </button>
    </main>
  );
}
